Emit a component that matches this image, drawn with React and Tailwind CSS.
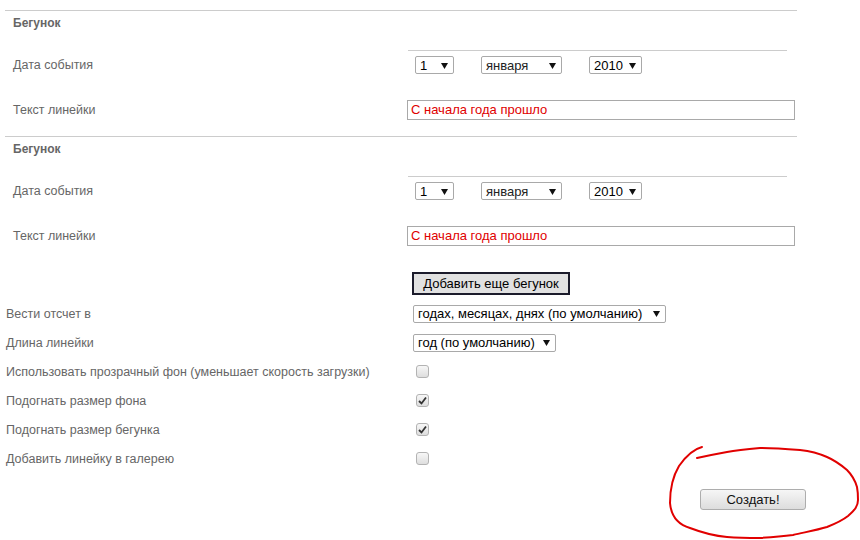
import React from "react";

const Arrow = () => (
  <svg width="7" height="7" viewBox="0 0 7 7" className="shrink-0">
    <path d="M0 1 L7 1 L3.5 7 Z" fill="#111" />
  </svg>
);

function Select({ text, w, textClass = "text-black" }) {
  return (
    <div
      className={`flex h-[18px] items-center justify-between rounded-[2px] border border-[#a9a9a9] bg-white pl-[4px] pr-[5px] text-[13px] leading-none ${textClass}`}
      style={{ width: w }}
    >
      <span>{text}</span>
      <Arrow />
    </div>
  );
}

function Section() {
  return (
    <div className="border-t border-[#cccccc]">
      <div className="h-[39px]">
        <div className="flex h-[23px] items-center pl-[8px] text-[12px] font-bold text-[#666]">
          Бегунок
        </div>
      </div>
      <div className="flex h-[30px]">
        <div className="flex w-[403px] items-center pl-[8px] text-[12.5px] leading-[16px] text-[#666]">
          Дата события
        </div>
        <div className="flex w-[379px] gap-[27px] border-t border-[#cccccc] pl-[7px] pt-[5px]">
          <Select text="1" w={39} />
          <Select text="января" w={81} textClass="text-[#222]" />
          <Select text="2010" w={53} />
        </div>
      </div>
      <div className="flex h-[56px] pt-[20px]">
        <div className="flex h-[20px] w-[402px] items-center pl-[8px] text-[12.5px] leading-[16px] text-[#666]">
          Текст линейки
        </div>
        <div className="flex h-[20px] w-[388px] items-center border border-[#a9a9a9] pl-[3px] text-[13px] text-[#e00000]">
          С начала года прошло
        </div>
      </div>
    </div>
  );
}

function Checkbox({ checked }) {
  return (
    <div className="flex h-[13px] w-[13px] items-center justify-center rounded-[3px] border border-[#b3b3b3] bg-gradient-to-b from-[#f7f7f7] to-[#dedede]">
      {checked && (
        <svg width="9" height="9" viewBox="0 0 9 9">
          <path d="M1 5 L3.5 7.5 L8 1.5" stroke="#333" strokeWidth="1.8" fill="none" />
        </svg>
      )}
    </div>
  );
}

function Row({ label, children }) {
  return (
    <div className="flex h-[29px] items-center">
      <div className="w-[408px] pl-[1px] pt-[1px] text-[12.5px] leading-[16px] text-[#666]">{label}</div>
      <div className="flex items-center">{children}</div>
    </div>
  );
}

export default function App() {
  return (
    <div
      className="relative h-[540px] w-[860px] overflow-hidden bg-white"
      style={{ fontFamily: '"Liberation Sans", Arial, sans-serif' }}
    >
      <div className="ml-[5px] w-[792px] pt-[10px]">
        <Section />
        <Section />
        <div className="h-[36px] pl-[407px] pt-[10px]">
          <button className="flex h-[23px] w-[158px] items-center justify-center border-2 border-[#1b1b2b] bg-[#e1e1e1] text-[13px] text-black">
            Добавить еще бегунок
          </button>
        </div>
        <div className="h-[1px]" />
        <Row label="Вести отсчет в">
          <Select text="годах, месяцах, днях (по умолчанию)" w={253} />
        </Row>
        <Row label="Длина линейки">
          <Select text="год (по умолчанию)" w={143} />
        </Row>
        <Row label="Использовать прозрачный фон (уменьшает скорость загрузки)">
          <div className="pl-[3px]"><Checkbox /></div>
        </Row>
        <Row label="Подогнать размер фона">
          <div className="pl-[3px]"><Checkbox checked /></div>
        </Row>
        <Row label="Подогнать размер бегунка">
          <div className="pl-[3px]"><Checkbox checked /></div>
        </Row>
        <Row label="Добавить линейку в галерею">
          <div className="pl-[3px]"><Checkbox /></div>
        </Row>
        <div className="pl-[695px] pt-[16px]">
          <button className="flex h-[21px] w-[106px] items-center justify-center rounded-[3px] border border-[#adadad] bg-gradient-to-b from-[#f6f6f6] to-[#dddddd] text-[13px] text-[#111]">
            Создать!
          </button>
        </div>
      </div>
      <svg
        className="pointer-events-none absolute left-0 top-0"
        width="860"
        height="540"
        viewBox="0 0 860 540"
      >
        <path
          d="M702 447 C 694 449, 686 456, 679 466 C 673 476, 670 490, 670 503 C 671 514, 676 524, 690 528 C 703 533, 715 536, 727 537 C 740 538, 750 538, 760 538 C 775 537, 785 536, 793 535 C 806 532, 817 530, 827 527 C 837 523, 843 520, 848 516 C 855 510, 858 506, 858 500 C 858 495, 858 492, 857 487 C 855 480, 852 475, 847 470 C 840 464, 834 460, 827 457 C 818 453, 809 451, 800 450 C 787 449, 773 448, 760 448 C 748 449, 737 450, 727 452 C 716 454, 706 456, 697 458"
          stroke="#e10000"
          strokeWidth="2"
          fill="none"
          strokeLinecap="round"
        />
      </svg>
    </div>
  );
}
